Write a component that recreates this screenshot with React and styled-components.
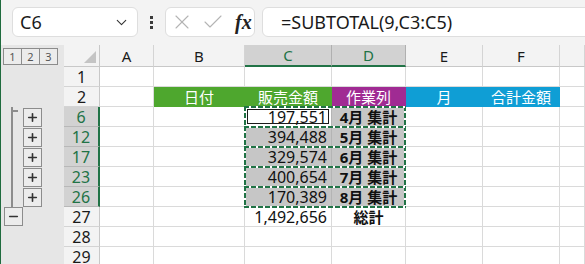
import React from 'react'
import styled, { createGlobalStyle } from 'styled-components'
import { ChevronDown, X, Check, Plus, Minus } from 'lucide-react'

const GREEN = '#217346'
const GRID = '#dadada'

const GlobalStyle = createGlobalStyle`
*{box-sizing:border-box;}
body{
  margin:0;
  background:#fff;
  font-family:'Noto Sans','Noto Sans CJK JP',sans-serif;
  overflow:hidden;
}
`

const Window = styled.div`
width:585px;
height:264px;
overflow:hidden;
border-left:1px solid #1f6b3e;
background:#fff;
`

const Toolbar = styled.div`
display:flex;
align-items:center;
height:45px;
padding:7px 0 8px 11px;
background:#f3f3f3;
`

const NameBox = styled.div`
width:126px;
height:30px;
background:#fff;
border:1px solid #dedede;
border-radius:6px;
display:flex;
align-items:center;
justify-content:space-between;
padding:0 7px 0 7px;
font-size:18px;
color:#1a1a1a;
`

const Kebab = styled.div`
display:flex;
flex-direction:column;
gap:2px;
margin:0 12px;
span{
  width:3px;
  height:3px;
  background:#3a3a3a;
}
`

const FxBox = styled.div`
width:90px;
height:30px;
background:#fff;
border:1px solid #dedede;
border-radius:6px;
display:flex;
align-items:center;
gap:7px;
padding-left:4px;
color:#b4b4b4;
`

const Fx = styled.span`
font-family:'Liberation Serif',serif;
font-style:italic;
font-weight:bold;
font-size:20px;
color:#222;
margin-left:3px;
`

const FormulaBox = styled.div`
flex:1;
height:30px;
margin-left:7px;
margin-right:-10px;
background:#fff;
border:1px solid #dedede;
border-radius:6px;
display:flex;
align-items:center;
padding-left:18px;
font-size:18px;
color:#1a1a1a;
`

const Sheet = styled.div`
display:flex;
`

const Outline = styled.div`
width:63px;
background:#e6e6e6;
display:flex;
flex-direction:column;
`

const LevelRow = styled.div`
height:22px;
display:flex;
align-items:center;
padding-left:2px;
`

const LevelBtn = styled.div`
width:19px;
height:17px;
border:1px solid #8c8c8c;
margin-right:-1px;
background:#ececec;
display:flex;
align-items:center;
justify-content:center;
font-size:11px;
color:#555;
`

const Spacer = styled.div`
height:${p => p.$h}px;
`

const Group = styled.div`
position:relative;
height:100px;
margin-left:10px;
padding:1px 0 0 10px;
border-left:2px solid #8c8c8c;
&::before{
  content:'';
  position:absolute;
  left:0;
  top:3px;
  width:5px;
  height:2px;
  background:#8c8c8c;
}
`

const GroupRow = styled.div`
height:20px;
display:flex;
align-items:flex-start;
`

const OutlineBtn = styled.div`
width:19px;
height:19px;
border:1px solid #8c8c8c;
background:#ececec;
display:flex;
align-items:center;
justify-content:center;
color:#333;
margin-left:${p => p.$left || 0}px;
`

const Grid = styled.div`
flex:1;
display:grid;
grid-template-columns:36px 54px 91px 87px 74px 77px 77px 1fr;
grid-template-rows:22px;
grid-auto-rows:20px;
`

const Corner = styled.div`
background:#f3f3f3;
border-right:1px solid #c8c8c8;
border-bottom:1px solid #c8c8c8;
display:flex;
align-items:flex-end;
justify-content:flex-end;
padding:0 3px 3px 0;
`

const ColHead = styled.div`
background:${p => (p.$sel ? '#d2d2d2' : '#f3f3f3')};
color:${p => (p.$sel ? GREEN : '#1a1a1a')};
border-right:1px solid ${p => (p.$sel ? '#b0b0b0' : '#d4d4d4')};
border-bottom:${p => (p.$sel ? `2px solid ${GREEN}` : '1px solid #c8c8c8')};
display:flex;
align-items:center;
justify-content:center;
font-size:15px;
`

const RowHead = styled.div`
background:${p => (p.$sel ? '#d2d2d2' : '#f3f3f3')};
color:${p => (p.$sel ? GREEN : '#1a1a1a')};
border-right:${p => (p.$sel ? `2px solid ${GREEN}` : '1px solid #c8c8c8')};
border-bottom:1px solid ${p => (p.$sel ? '#b8b8b8' : '#d4d4d4')};
display:flex;
align-items:center;
justify-content:center;
font-size:16px;
`

const Cell = styled.div`
background:${p => p.$bg || '#fff'};
color:${p => p.$color || '#111'};
border-right:1px solid ${p => p.$bg || GRID};
border-bottom:1px solid ${p => p.$bg || GRID};
display:flex;
align-items:center;
justify-content:${p => p.$align || 'flex-start'};
padding:0 4px;
font-size:${p => (p.$num ? 16 : 15)}px;
font-weight:${p => (p.$bold ? 700 : 400)};
white-space:nowrap;
overflow:hidden;
`

const Range = styled.div`
grid-column:span 2;
display:grid;
grid-template-columns:87px 74px;
position:relative;
&::after{
  content:'';
  position:absolute;
  inset:-1px 0 -1px -1px;
  pointer-events:none;
  background:
    repeating-linear-gradient(90deg, ${GREEN} 0 5px, #fff 5px 7px) top left / 100% 2px no-repeat,
    repeating-linear-gradient(90deg, ${GREEN} 0 5px, #fff 5px 7px) bottom left / 100% 2px no-repeat,
    repeating-linear-gradient(180deg, ${GREEN} 0 5px, #fff 5px 7px) top left / 2px 100% no-repeat,
    repeating-linear-gradient(180deg, ${GREEN} 0 5px, #fff 5px 7px) top right / 2px 100% no-repeat;
}
`

const SelCell = styled(Cell)`
background:${p => (p.$active ? '#fff' : '#c6c6c6')};
border-right:1px solid #b4b4b4;
border-bottom:1px solid #b4b4b4;
box-shadow:${p => (p.$active ? 'inset 0 0 0 2px #fff, inset 0 0 0 3px #1a1a1a' : 'none')};
`

const columns = ['A', 'B', 'C', 'D', 'E', 'F', '']

const subtotals = [
  { n: 6, amount: '197,551', label: '4月 集計', active: true },
  { n: 12, amount: '394,488', label: '5月 集計' },
  { n: 17, amount: '329,574', label: '6月 集計' },
  { n: 23, amount: '400,654', label: '7月 集計' },
  { n: 26, amount: '170,389', label: '8月 集計' },
]

const EmptyRow = ({ n }) => (
  <>
    <RowHead>{n}</RowHead>
    {columns.map((c, i) => <Cell key={i} />)}
  </>
)

const App = () => {
  return (
    <Window>
      <GlobalStyle />
      <Toolbar>
        <NameBox>
          <span>C6</span>
          <ChevronDown size={17} strokeWidth={1.5} color="#333" />
        </NameBox>
        <Kebab><span /><span /><span /></Kebab>
        <FxBox>
          <X size={24} strokeWidth={1.1} />
          <Check size={24} strokeWidth={1.1} />
          <Fx>fx</Fx>
        </FxBox>
        <FormulaBox>=SUBTOTAL(9,C3:C5)</FormulaBox>
      </Toolbar>

      <Sheet>
        <Outline>
          <LevelRow>
            <LevelBtn>1</LevelBtn>
            <LevelBtn>2</LevelBtn>
            <LevelBtn>3</LevelBtn>
          </LevelRow>
          <Spacer $h={40} />
          <Group>
            {subtotals.map(r => (
              <GroupRow key={r.n}>
                <OutlineBtn><Plus size={13} strokeWidth={3} /></OutlineBtn>
              </GroupRow>
            ))}
          </Group>
          <GroupRow>
            <OutlineBtn $left={3}><Minus size={13} strokeWidth={3} /></OutlineBtn>
          </GroupRow>
        </Outline>

        <Grid>
          <Corner>
            <svg width="12" height="12" viewBox="0 0 12 12">
              <polygon points="12,0 12,12 0,12" fill="#c4c4c4" />
            </svg>
          </Corner>
          {columns.map((c, i) => (
            <ColHead key={i} $sel={c === 'C' || c === 'D'}>{c}</ColHead>
          ))}

          <EmptyRow n={1} />

          <RowHead>2</RowHead>
          <Cell />
          <Cell $bg="#4ea72e" $color="#fff" $align="center">日付</Cell>
          <Cell $bg="#4ea72e" $color="#fff" $align="center">販売金額</Cell>
          <Cell $bg="#a02b93" $color="#fff" $align="center">作業列</Cell>
          <Cell $bg="#0f9ed5" $color="#fff" $align="center">月</Cell>
          <Cell $bg="#0f9ed5" $color="#fff" $align="center">合計金額</Cell>
          <Cell />

          {subtotals.map(r => (
            <React.Fragment key={r.n}>
              <RowHead $sel>{r.n}</RowHead>
              <Cell />
              <Cell />
              <Range>
                <SelCell $active={r.active} $align="flex-end" $num>{r.amount}</SelCell>
                <SelCell $align="center" $bold>{r.label}</SelCell>
              </Range>
              <Cell />
              <Cell />
              <Cell />
            </React.Fragment>
          ))}

          <RowHead>27</RowHead>
          <Cell />
          <Cell />
          <Cell $align="flex-end" $num>1,492,656</Cell>
          <Cell $align="center" $bold>総計</Cell>
          <Cell />
          <Cell />
          <Cell />

          <EmptyRow n={28} />
          <EmptyRow n={29} />
        </Grid>
      </Sheet>
    </Window>
  )
}

export default App
